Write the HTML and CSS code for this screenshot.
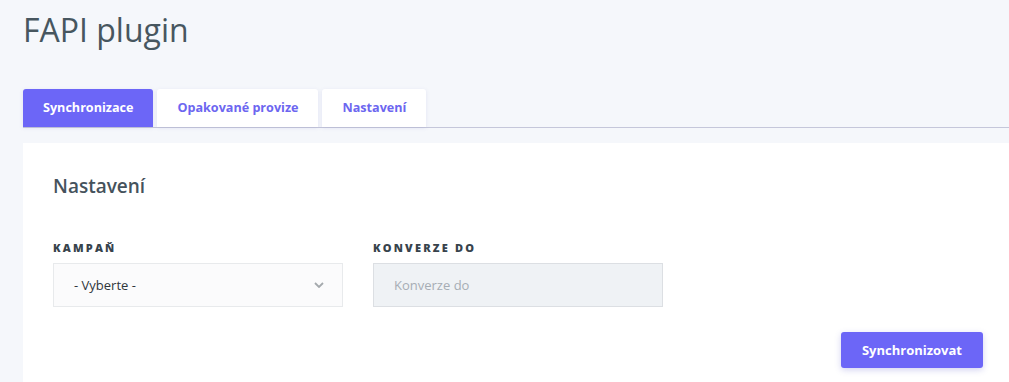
FILE: index.html
```html
<!DOCTYPE html>
<html lang="cs">
<head>
    <meta charset="UTF-8">
    <title>FAPI plugin</title>
    <link rel="stylesheet" href="styles.css">
</head>
<body>
    <div class="wrap">
        <h1>FAPI plugin</h1>
        <div class="tabs">
            <a class="tab active" href="#">Synchronizace</a>
            <a class="tab" href="#">Opakované provize</a>
            <a class="tab" href="#">Nastavení</a>
        </div>
        <div class="card">
            <h2>Nastavení</h2>
            <div class="fields">
                <div class="field">
                    <label for="campaign">Kampaň</label>
                    <div class="select">
                        <span>- Vyberte -</span>
                        <svg width="10" height="6" viewBox="0 0 10 6"><path d="M1 1l4 4 4-4" fill="none" stroke="#a4a9ad" stroke-width="1.8"/></svg>
                    </div>
                </div>
                <div class="field">
                    <label for="conversion">Konverze do</label>
                    <input type="text" id="conversion" placeholder="Konverze do">
                </div>
            </div>
            <div class="actions">
                <button class="btn">Synchronizovat</button>
            </div>
        </div>
    </div>
</body>
</html>
```

FILE: styles.css
```css
body {
    margin: 0;
    background: #f5f7fb;
    font-family: 'Open Sans', sans-serif;
    overflow: hidden;
}

.wrap {
    padding: 10px 0 0 23px;
}

h1 {
    margin: 0;
    font-size: 32px;
    font-weight: 400;
    color: #47565f;
    line-height: 40px;
}

.tabs {
    display: flex;
    gap: 4px;
    margin-top: 39px;
    border-bottom: 1px solid #c5c7da;
}

.tab {
    display: block;
    height: 38px;
    line-height: 38px;
    padding: 0 20px;
    background: #fff;
    color: #6c66f0;
    font-size: 12.6px;
    font-weight: 700;
    text-decoration: none;
    border-radius: 3px 3px 0 0;
    box-shadow: 0 1px 4px rgba(90, 90, 180, 0.12);
}

.tab.active {
    background: #6c66f7;
    color: #fff;
}

.card {
    margin-top: 15px;
    margin-right: -4px;
    background: #fff;
    padding: 29px 30px 14px 30px;
    height: 230px;
}

h2 {
    margin: 0;
    font-size: 19px;
    font-weight: 600;
    color: #45525c;
    line-height: 28px;
}

.fields {
    display: flex;
    gap: 30px;
    margin-top: 40px;
}

.field {
    width: 290px;
}

label {
    display: block;
    font-size: 11px;
    font-weight: 800;
    letter-spacing: 2.2px;
    text-transform: uppercase;
    color: #37434c;
    line-height: 16px;
    margin-bottom: 7px;
}

.select {
    display: flex;
    align-items: center;
    justify-content: space-between;
    height: 44px;
    box-sizing: border-box;
    padding: 0 20px;
    border: 1px solid #e8eaec;
    background: #fbfbfc;
    font-size: 13px;
    color: #2f363b;
}

.select svg {
    margin-right: -2px;
}

input {
    display: block;
    width: 100%;
    height: 44px;
    box-sizing: border-box;
    padding: 0 20px;
    border: 1px solid #dcdfe3;
    background: #eff2f5;
    font-family: 'Open Sans', sans-serif;
    font-size: 13px;
}

input::placeholder {
    color: #a6adb4;
}

.actions {
    display: flex;
    justify-content: flex-end;
    margin-top: 25px;
}

.btn {
    height: 36px;
    padding: 0 21px;
    background: #6c66f7;
    color: #fff;
    border: none;
    border-radius: 3px;
    font-family: 'Open Sans', sans-serif;
    font-size: 13px;
    font-weight: 700;
    box-shadow: 0 2px 6px rgba(80, 80, 200, 0.25);
}
```
